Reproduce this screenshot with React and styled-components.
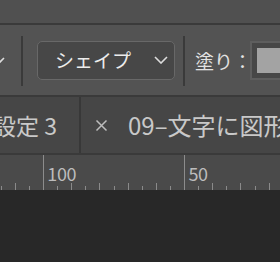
import styled, { createGlobalStyle } from "styled-components";

const GlobalStyle = createGlobalStyle`
	html, body {
		margin: 0;
		padding: 0;
		background: #282828;
	}
	body {
		font-family: "Noto Sans CJK JP", "Noto Sans", sans-serif;
	}
`;

const TICK = 14.12;

const Chevron = ({ className }) => (
	<svg className={className} width="14" height="8" viewBox="0 0 14 8">
		<polyline points="1,1 7,7 13,1" fill="none" stroke="#dcdcdc" strokeWidth="1.6" />
	</svg>
);

const CloseIcon = () => (
	<svg width="13" height="13" viewBox="0 0 13 13">
		<path d="M1.5 1.5 L11.5 11.5 M11.5 1.5 L1.5 11.5" stroke="#bdbdbd" strokeWidth="1.5" />
	</svg>
);

const RulerTicks = () => (
	<svg width="141" height="7" viewBox="0 0 141 7">
		{Array.from({ length: 9 }, (_, k) => {
			const i = k + 1;
			const x = Math.round(i * TICK) - 0.5;
			const h = i % 2 === 0 ? 7 : 4;
			return <line key={i} x1={x} x2={x} y1={7 - h} y2={7} stroke="#8a8a8a" strokeWidth="1" />;
		})}
	</svg>
);

const App = () => {
	return (
		<>
			<GlobalStyle />
			<Page>
				<TopStrip />
				<Toolbar>
					<EdgeChevron />
					<Divider />
					<Dropdown>
						<span>シェイプ</span>
						<Chevron />
					</Dropdown>
					<Divider $right />
					<Label>塗り：</Label>
					<Swatch>
						<SwatchColor />
					</Swatch>
				</Toolbar>
				<Tabs>
					<Tab $first>設定 3</Tab>
					<Tab>
						<CloseIcon />
						<TabName>09–文字に図形</TabName>
					</Tab>
				</Tabs>
				<Ruler>
					{["150", "100", "50"].map((n) => (
						<Segment key={n}>
							<RulerLabel>{n}</RulerLabel>
							<RulerTicks />
						</Segment>
					))}
				</Ruler>
				<Canvas />
			</Page>
		</>
	);
};

const Page = styled.div`
	display: flex;
	flex-direction: column;
	width: 280px;
	height: 100vh;
	overflow: hidden;
`;
const TopStrip = styled.div`
	height: 23px;
	flex-shrink: 0;
	background: #505050;
	border-bottom: 2px solid #3a3a3a;
`;
const Toolbar = styled.div`
	display: flex;
	align-items: center;
	height: 70px;
	flex-shrink: 0;
	background: #535353;
	border-bottom: 2px solid #3a3a3a;
	overflow: hidden;
`;
const EdgeChevron = styled(Chevron)`
	flex-shrink: 0;
	margin-left: -9px;
	margin-top: 1px;
`;
const Divider = styled.div`
	width: 2px;
	height: 50px;
	margin-top: 2px;
	flex-shrink: 0;
	background: #3a3a3a;
	margin-left: ${(p) => (p.$right ? "8px" : "16px")};
`;
const Dropdown = styled.div`
	display: flex;
	align-items: center;
	justify-content: space-between;
	box-sizing: border-box;
	width: 138px;
	height: 39px;
	flex-shrink: 0;
	margin-left: 14px;
	padding: 0 6px 0 17px;
	background: #474747;
	border: 1.5px solid #686868;
	border-radius: 5px;
	color: #ececec;
	font-size: 19px;
	line-height: 1;
	span {
		margin-top: -1px;
	}
`;
const Label = styled.div`
	width: 55px;
	flex-shrink: 0;
	margin-left: 10px;
	color: #e2e2e2;
	font-size: 19px;
	white-space: nowrap;
	line-height: 1;
`;
const Swatch = styled.div`
	display: flex;
	box-sizing: border-box;
	width: 40px;
	height: 39px;
	flex-shrink: 0;
	padding: 5px;
	background: #474747;
	border: 2px solid #5e5e5e;
`;
const SwatchColor = styled.div`
	flex: 1;
	background: #a3a3a3;
`;
const Tabs = styled.div`
	display: flex;
	height: 56px;
	flex-shrink: 0;
	background: #464646;
	border-bottom: 2px solid #3a3a3a;
	overflow: hidden;
`;
const Tab = styled.div`
	display: flex;
	align-items: center;
	flex-shrink: 0;
	box-sizing: border-box;
	color: #c9c9c9;
	font-size: 24px;
	white-space: nowrap;
	${(p) =>
		p.$first
			? `
		width: 81px;
		justify-content: flex-end;
		padding-right: 22px;
		font-size: 23px;
		border-right: 2px solid #383838;
	`
			: `
		padding-left: 14px;
		gap: 20px;
	`}
`;
const TabName = styled.span`
	margin-top: -2px;
`;
const Ruler = styled.div`
	display: flex;
	height: 35px;
	flex-shrink: 0;
	background: #4a4a4a;
	margin-left: -98px;
	overflow: hidden;
`;
const Segment = styled.div`
	display: flex;
	flex-direction: column;
	justify-content: space-between;
	width: 141.2px;
	flex-shrink: 0;
	box-sizing: border-box;
	border-left: 1px solid #8c8c8c;
`;
const RulerLabel = styled.div`
	padding: 8px 0 0 3px;
	color: #bcbcbc;
	font-size: 18px;
	line-height: 20px;
	letter-spacing: -0.3px;
`;
const Canvas = styled.div`
	flex: 1;
	background: #282828;
`;

export default App;
